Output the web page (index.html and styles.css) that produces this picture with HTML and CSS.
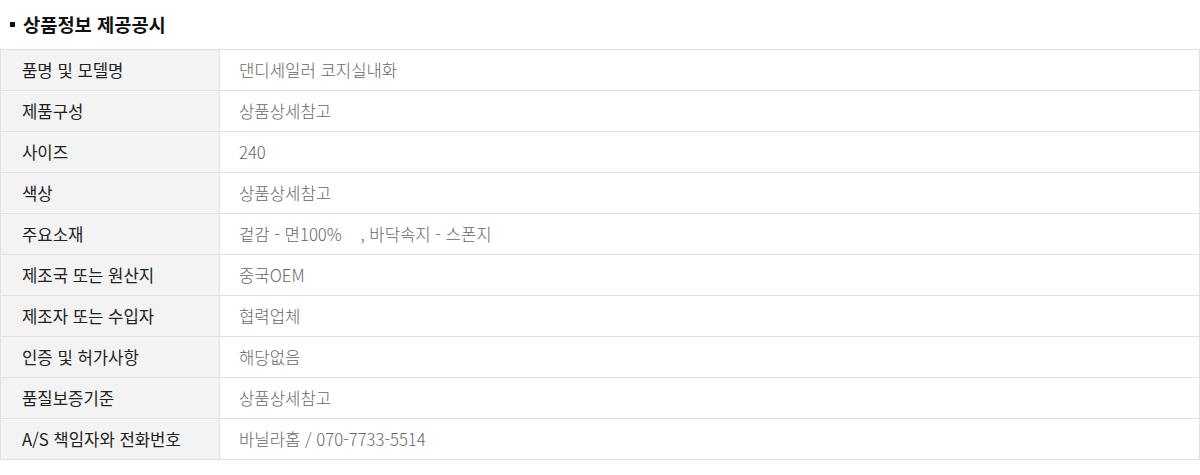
FILE: index.html
```html
<!DOCTYPE html>
<html lang="ko">
<head>
<meta charset="utf-8">
<link rel="stylesheet" href="styles.css">
</head>
<body>
<div class="wrap">
  <h3 class="title"><span class="bullet"></span>상품정보 제공공시</h3>
  <table class="info">
    <tr><th>품명 및 모델명</th><td>댄디세일러 코지실내화</td></tr>
    <tr><th>제품구성</th><td>상품상세참고</td></tr>
    <tr><th>사이즈</th><td>240</td></tr>
    <tr><th>색상</th><td>상품상세참고</td></tr>
    <tr><th>주요소재</th><td>겉감 - 면100% &nbsp;&nbsp;&nbsp;, 바닥속지 - 스폰지</td></tr>
    <tr><th>제조국 또는 원산지</th><td>중국OEM</td></tr>
    <tr><th>제조자 또는 수입자</th><td>협력업체</td></tr>
    <tr><th>인증 및 허가사항</th><td>해당없음</td></tr>
    <tr><th>품질보증기준</th><td>상품상세참고</td></tr>
    <tr><th>A/S 책임자와 전화번호</th><td>바닐라홈 / 070-7733-5514</td></tr>
  </table>
</div>
</body>
</html>
```
FILE: styles.css
```css
html, body {
  margin: 0;
  padding: 0;
  background: #fff;
}
body {
  font-family: "Noto Sans CJK KR", "Noto Sans", sans-serif;
}
.wrap {
  width: 1200px;
}
.title {
  margin: 0;
  height: 49px;
  display: flex;
  align-items: center;
  padding-left: 10px;
  box-sizing: border-box;
  font-size: 18.7px;
  font-weight: 700;
  color: #111;
  line-height: 1;
}
.title .bullet {
  display: inline-block;
  width: 5px;
  height: 5px;
  background: #111;
  margin-right: 8px;
}
.info {
  width: 1200px;
  border-collapse: collapse;
  table-layout: fixed;
}
.info th, .info td {
  border: 1px solid #e0e0e0;
  height: 40px;
  padding: 0;
  font-weight: 400;
  text-align: left;
  vertical-align: middle;
  line-height: 20px;
}
.info th {
  width: 197px;
  padding-left: 21px;
  background: #f3f3f3;
  color: #222;
  font-size: 16.7px;
}
.info td {
  padding-left: 19px;
  color: #666;
  background: #fff;
  font-size: 16.7px;
  font-weight: 300;
}
```
